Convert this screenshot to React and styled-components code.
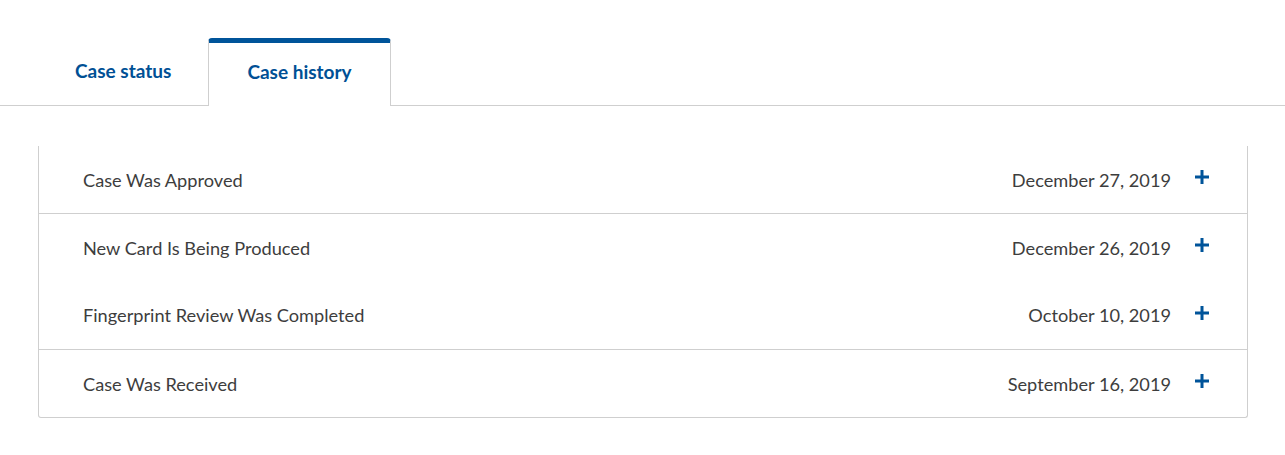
import React from 'react'
import styled, { createGlobalStyle } from 'styled-components'

const GlobalStyle = createGlobalStyle`
  body {
    margin: 0;
    background: #fff;
    font-family: 'Source Sans Pro', Lato, 'Liberation Sans', sans-serif;
  }
  * { box-sizing: border-box; }
`

const Page = styled.div`
  padding-top: 38px;
`

const TabBar = styled.div`
  display: flex;
  align-items: flex-end;
  padding-left: 38px;
  border-bottom: 1px solid #cfcfcf;
  height: 68px;
`

const Tab = styled.button`
  font: inherit;
  font-size: 19px;
  font-weight: 700;
  color: #005095;
  background: transparent;
  padding: 0 38px;
  cursor: pointer;
  border: none;
  border-radius: 4px 4px 0 0;
  ${p => p.active ? `
    height: 68px;
    margin-bottom: -1px;
    background: #fff;
    border-top: 5px solid #00549a;
    border-left: 1px solid #cfcfcf;
    border-right: 1px solid #cfcfcf;
    padding-bottom: 6px;
  ` : `
    height: 67px;
    padding: 0 37px 2px;
  `}
`

const List = styled.div`
  margin: 40px 37px 0 38px;
  border: 1px solid #cfcfcf;
  border-top: none;
  border-radius: 0 0 3px 3px;
`

const Row = styled.div`
  display: flex;
  align-items: center;
  height: 68px;
  padding: 0 38px 0 44px;
  color: #3d3d3d;
  font-size: 18.2px;
  border-top: ${p => p.divider ? '1px solid #cfcfcf' : 'none'};
  &:first-child {
    height: 67px;
  }
`

const Title = styled.div`
  flex: 1;
`

const DateText = styled.div`
  margin-right: 24px;
`

const Plus = () => (
  <svg width="14" height="14" viewBox="0 0 14 14" style={{ marginTop: -5 }}>
    <path d="M5.5 0h3v5.5H14v3H8.5V14h-3V8.5H0v-3h5.5z" fill="#00549a" />
  </svg>
)

const events = [
  { title: 'Case Was Approved', date: 'December 27, 2019', divider: false },
  { title: 'New Card Is Being Produced', date: 'December 26, 2019', divider: true },
  { title: 'Fingerprint Review Was Completed', date: 'October 10, 2019', divider: false },
  { title: 'Case Was Received', date: 'September 16, 2019', divider: true }
]

export default function App() {
  return (
    <Page>
      <GlobalStyle />
      <TabBar>
        <Tab>Case status</Tab>
        <Tab active>Case history</Tab>
      </TabBar>
      <List>
        {events.map(ev =>
          <Row key={ev.title} divider={ev.divider}>
            <Title>{ev.title}</Title>
            <DateText>{ev.date}</DateText>
            <Plus />
          </Row>
        )}
      </List>
    </Page>
  )
}
